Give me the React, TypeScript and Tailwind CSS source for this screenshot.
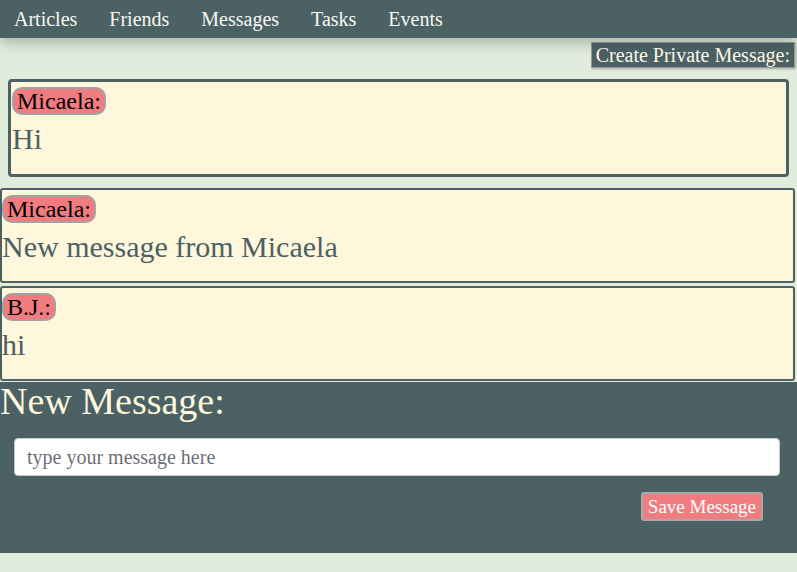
import { useState } from 'react';

const serif = "font-['Liberation_Serif','Times_New_Roman',serif]";

const navItems = ['Articles', 'Friends', 'Messages', 'Tasks', 'Events'];

const messages = [
  { author: 'Micaela', text: 'Hi', own: true },
  { author: 'Micaela', text: 'New message from Micaela', own: false },
  { author: 'B.J.', text: 'hi', own: false },
];

const Badge = ({ name }: { name: string }) => (
  <span className="inline-block rounded-[10px] border-2 border-[#a3a3a3] bg-[#f07c80] px-[3px] text-[24px] leading-[24px] text-black">
    {name}:
  </span>
);

const MessageCard = ({ author, text, own }: { author: string; text: string; own: boolean }) => (
  <div
    className={
      own
        ? 'mx-2 h-[98px] rounded-[4px] border-[3px] border-[#4b6164] bg-[#fff7dc] px-[1px] pt-[5px]'
        : 'mr-[2px] h-[95px] rounded-[3px] border-2 border-[#4b6164] bg-[#fff7dc] pt-[5px]'
    }
  >
    <Badge name={author} />
    <p className="text-[30px] leading-[45px] text-[#4b6164]">{text}</p>
  </div>
);

export default function App() {
  const [draft, setDraft] = useState('');

  return (
    <div className={`${serif} min-h-screen bg-[#e2ecdd]`}>
      {/* top nav */}
      <nav className="relative z-10 flex h-[38px] items-center gap-8 bg-[#4b6164] pl-[14px] text-[20px] text-[#f7f7f2] shadow-[0_4px_14px_rgba(40,60,60,0.35)]">
        {navItems.map((item) => (
          <a key={item} href="#" className="leading-none">
            {item}
          </a>
        ))}
      </nav>

      <div className="flex justify-end pt-1 pr-[2px]">
        <button className="h-[26px] border border-[#9a9a9a] bg-[#4b6164] px-[4px] text-[20px] leading-[22px] text-[#fff8ea] shadow-[1px_1px_2px_rgba(0,0,0,0.3)]">
          Create Private Message:
        </button>
      </div>

      <div className="mt-[11px] flex flex-col">
        <MessageCard {...messages[0]} />
        <div className="mt-[11px] flex flex-col gap-[3px]">
          <MessageCard {...messages[1]} />
          <MessageCard {...messages[2]} />
        </div>
      </div>

      {/* new message form */}
      <section className="mt-[1px] flex h-[171px] flex-col bg-[#4b6164]">
        <h2 className="text-[38px] leading-[38px] text-[#fff8dc]">New Message:</h2>
        <input
          value={draft}
          onChange={(e) => setDraft(e.target.value)}
          placeholder="type your message here"
          className="mx-[14px] mt-[18px] h-[38px] w-[766px] rounded-[4px] border border-[#c9c9c9] bg-white px-3 text-[20px] text-[#444] outline-none placeholder:text-[#6c6f78]"
        />
        <div className="mt-4 flex justify-end pr-[34px]">
          <button className="h-[29px] rounded-[3px] border-2 border-[#a9a9a9] bg-[#f07c80] px-[5px] text-[19px] leading-[23px] text-white">
            Save Message
          </button>
        </div>
      </section>
    </div>
  );
}
